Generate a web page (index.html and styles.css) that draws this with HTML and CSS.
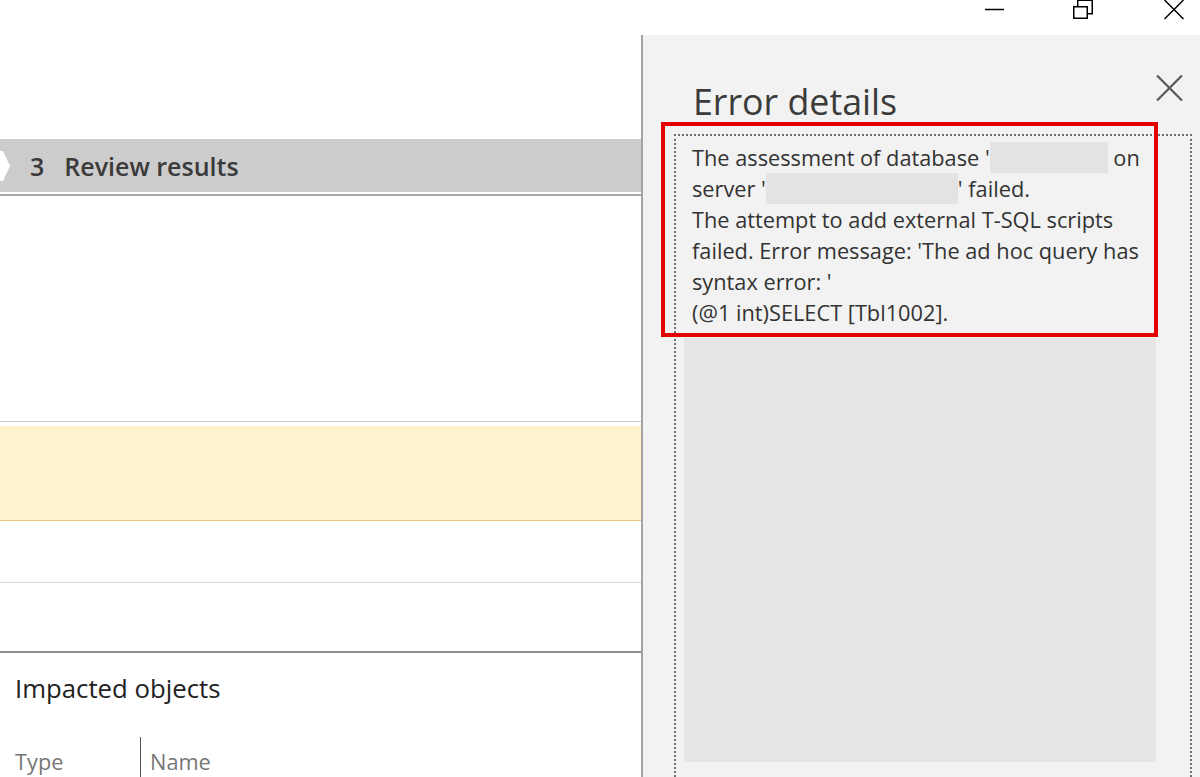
FILE: index.html
```html
<!DOCTYPE html>
<html>
<head>
  <title>Data Migration Assistant - Error details</title>
  <meta name="viewport" content="width=device-width, initial-scale=1">
  <link rel="stylesheet" href="styles.css">
</head>
<body>

  <div class="titlebar">
    <span class="winbtn min">
      <svg width="20" height="20" viewBox="0 0 20 20"><path d="M0 10.5H19" stroke="#000" stroke-width="1.5" fill="none"/></svg>
    </span>
    <span class="winbtn restore">
      <svg width="20" height="20" viewBox="0 0 20 20"><rect x="0.75" y="7.75" width="13.5" height="11.5" stroke="#000" stroke-width="1.5" fill="none"/><path d="M4.75 7.5V1.25H19.25V14.75H14.5" stroke="#000" stroke-width="1.5" fill="none"/></svg>
    </span>
    <span class="winbtn close">
      <svg width="20" height="20" viewBox="0 0 20 20"><path d="M0.5 0L19.5 19M19.5 0L0.5 19" stroke="#000" stroke-width="1.5" fill="none"/></svg>
    </span>
  </div>

  <div class="main">
    <div class="wizard">
      <div class="step-bar">
        <svg class="step-notch" width="10" height="30" viewBox="0 0 10 30"><path d="M0 0H3L10 15L3 30H0Z" fill="#fff"/></svg>
        <span class="step-num">3</span>
        <span class="step-title">Review results</span>
      </div>
      <div class="results">
        <div class="result-top"></div>
        <div class="result-row selected"></div>
        <div class="result-row"></div>
        <div class="result-row last"></div>
      </div>
      <div class="impacted">
        <h3>Impacted objects</h3>
        <div class="columns">
          <span class="col type">Type</span>
          <span class="col name">Name</span>
        </div>
      </div>
    </div>

    <aside class="details">
      <div class="details-head">
        <h2>Error details</h2>
        <button class="close-btn">
          <svg width="27" height="26" viewBox="0 0 27 26"><path d="M1 0.5L26 25.5M26 0.5L1 25.5" stroke="#595959" stroke-width="2.2" fill="none"/></svg>
        </button>
      </div>
      <div class="details-box">
        <div class="message">
          The assessment of database '<span class="redact db"></span> on<br>
          server '<span class="redact server"></span>' failed.<br>
          The attempt to add external T-SQL scripts<br>
          failed. Error message: 'The ad hoc query has<br>
          syntax error: '<br>
          (@1 int)SELECT [Tbl1002].
        </div>
        <div class="message-rest"></div>
      </div>
      <div class="highlight"></div>
    </aside>
  </div>

</body>
</html>
```

FILE: styles.css
```css
* { box-sizing: border-box; }
html, body { margin: 0; padding: 0; }
body {
  width: 1200px;
  height: 777px;
  overflow: hidden;
  background: #fff;
  font-family: "Open Sans", "Noto Sans", sans-serif;
  color: #333;
}

/* window caption buttons, top of the window is cut off */
.titlebar {
  height: 35px;
  display: flex;
  justify-content: flex-end;
  padding-right: 16px;
}
.winbtn { display: block; width: 20px; height: 20px; }
.winbtn svg { display: block; }
.winbtn.min { margin-right: 68px; margin-top: -1px; }
.winbtn.restore { margin-right: 71px; margin-top: -1px; }

.main {
  display: flex;
  height: 742px;
  overflow: hidden;
}

/* left side: wizard */
.wizard {
  width: 641px;
  flex: none;
  padding-top: 104px;
}
.step-bar {
  height: 53px;
  background-color: #cccccc;
  display: flex;
  align-items: center;
  color: #3a3a3a;
  font-size: 25px;
  font-weight: 600;
}
.step-notch { display: block; margin-right: 20px; }
.step-num { margin-right: 20px; }
.results {
  margin-top: 2px;
  border-top: 2px solid #a8a8a8;
}
.result-top {
  height: 226px;
  border-bottom: 1px solid #c8c8c8;
}
.result-row {
  height: 62px;
  border-bottom: 1px solid #d6d6d6;
}
.result-row.selected {
  margin-top: 4px;
  height: 95px;
  background-color: #fff2cc;
  border-bottom: 1px solid #e8c779;
}
.result-row.last {
  height: 70px;
  border-bottom: 2px solid #8f8f8f;
}
.impacted { padding-left: 15px; }
.impacted h3 {
  margin: 0;
  padding-top: 17px;
  height: 84px;
  font-size: 25.75px;
  font-weight: 400;
  color: #222;
}
.columns {
  display: flex;
  height: 40px;
  color: #767676;
  font-size: 21.75px;
  padding-top: 10px;
}
.col.type { width: 125px; }
.col.name {
  border-left: 1.5px solid #555;
  padding-left: 9px;
  margin-top: -10px;
  padding-top: 10px;
}

/* right side: error details pane */
.details {
  position: relative;
  flex: 1;
  display: flex;
  flex-direction: column;
  background-color: #f2f2f2;
  border-left: 2px solid #a3a3a3;
  padding-left: 31px;
  padding-right: 8px;
}
.details-head {
  height: 99px;
  flex: none;
  display: flex;
  align-items: flex-start;
  justify-content: space-between;
}
.details-head h2 {
  margin: 0;
  padding: 42px 0 0 19px;
  font-size: 35.75px;
  font-weight: 400;
  line-height: 48px;
  color: #3b3b3b;
}
.close-btn {
  border: none;
  background: none;
  padding: 0;
  margin: 40px 9px 0 0;
  cursor: pointer;
}
.close-btn svg { display: block; }
.details-box {
  flex: 1;
  border: 2px dotted #6e6e6e;
  border-bottom: none;
  padding-left: 8px;
  padding-right: 34px;
}
.message {
  padding: 6px 0 10px 8px;
  font-size: 21.75px;
  line-height: 31px;
  color: #333;
  white-space: nowrap;
}
.redact {
  display: inline-block;
  height: 31px;
  vertical-align: top;
  background-color: #e4e2e2;
}
.redact.db { width: 118px; }
.redact.server { width: 192px; }
.message-rest {
  height: 424px;
  background-color: #e6e5e5;
}

/* annotation drawn over the message */
.highlight {
  position: absolute;
  left: 18px;
  top: 87px;
  width: 497px;
  height: 215px;
  border: 4px solid #e30000;
}
```
